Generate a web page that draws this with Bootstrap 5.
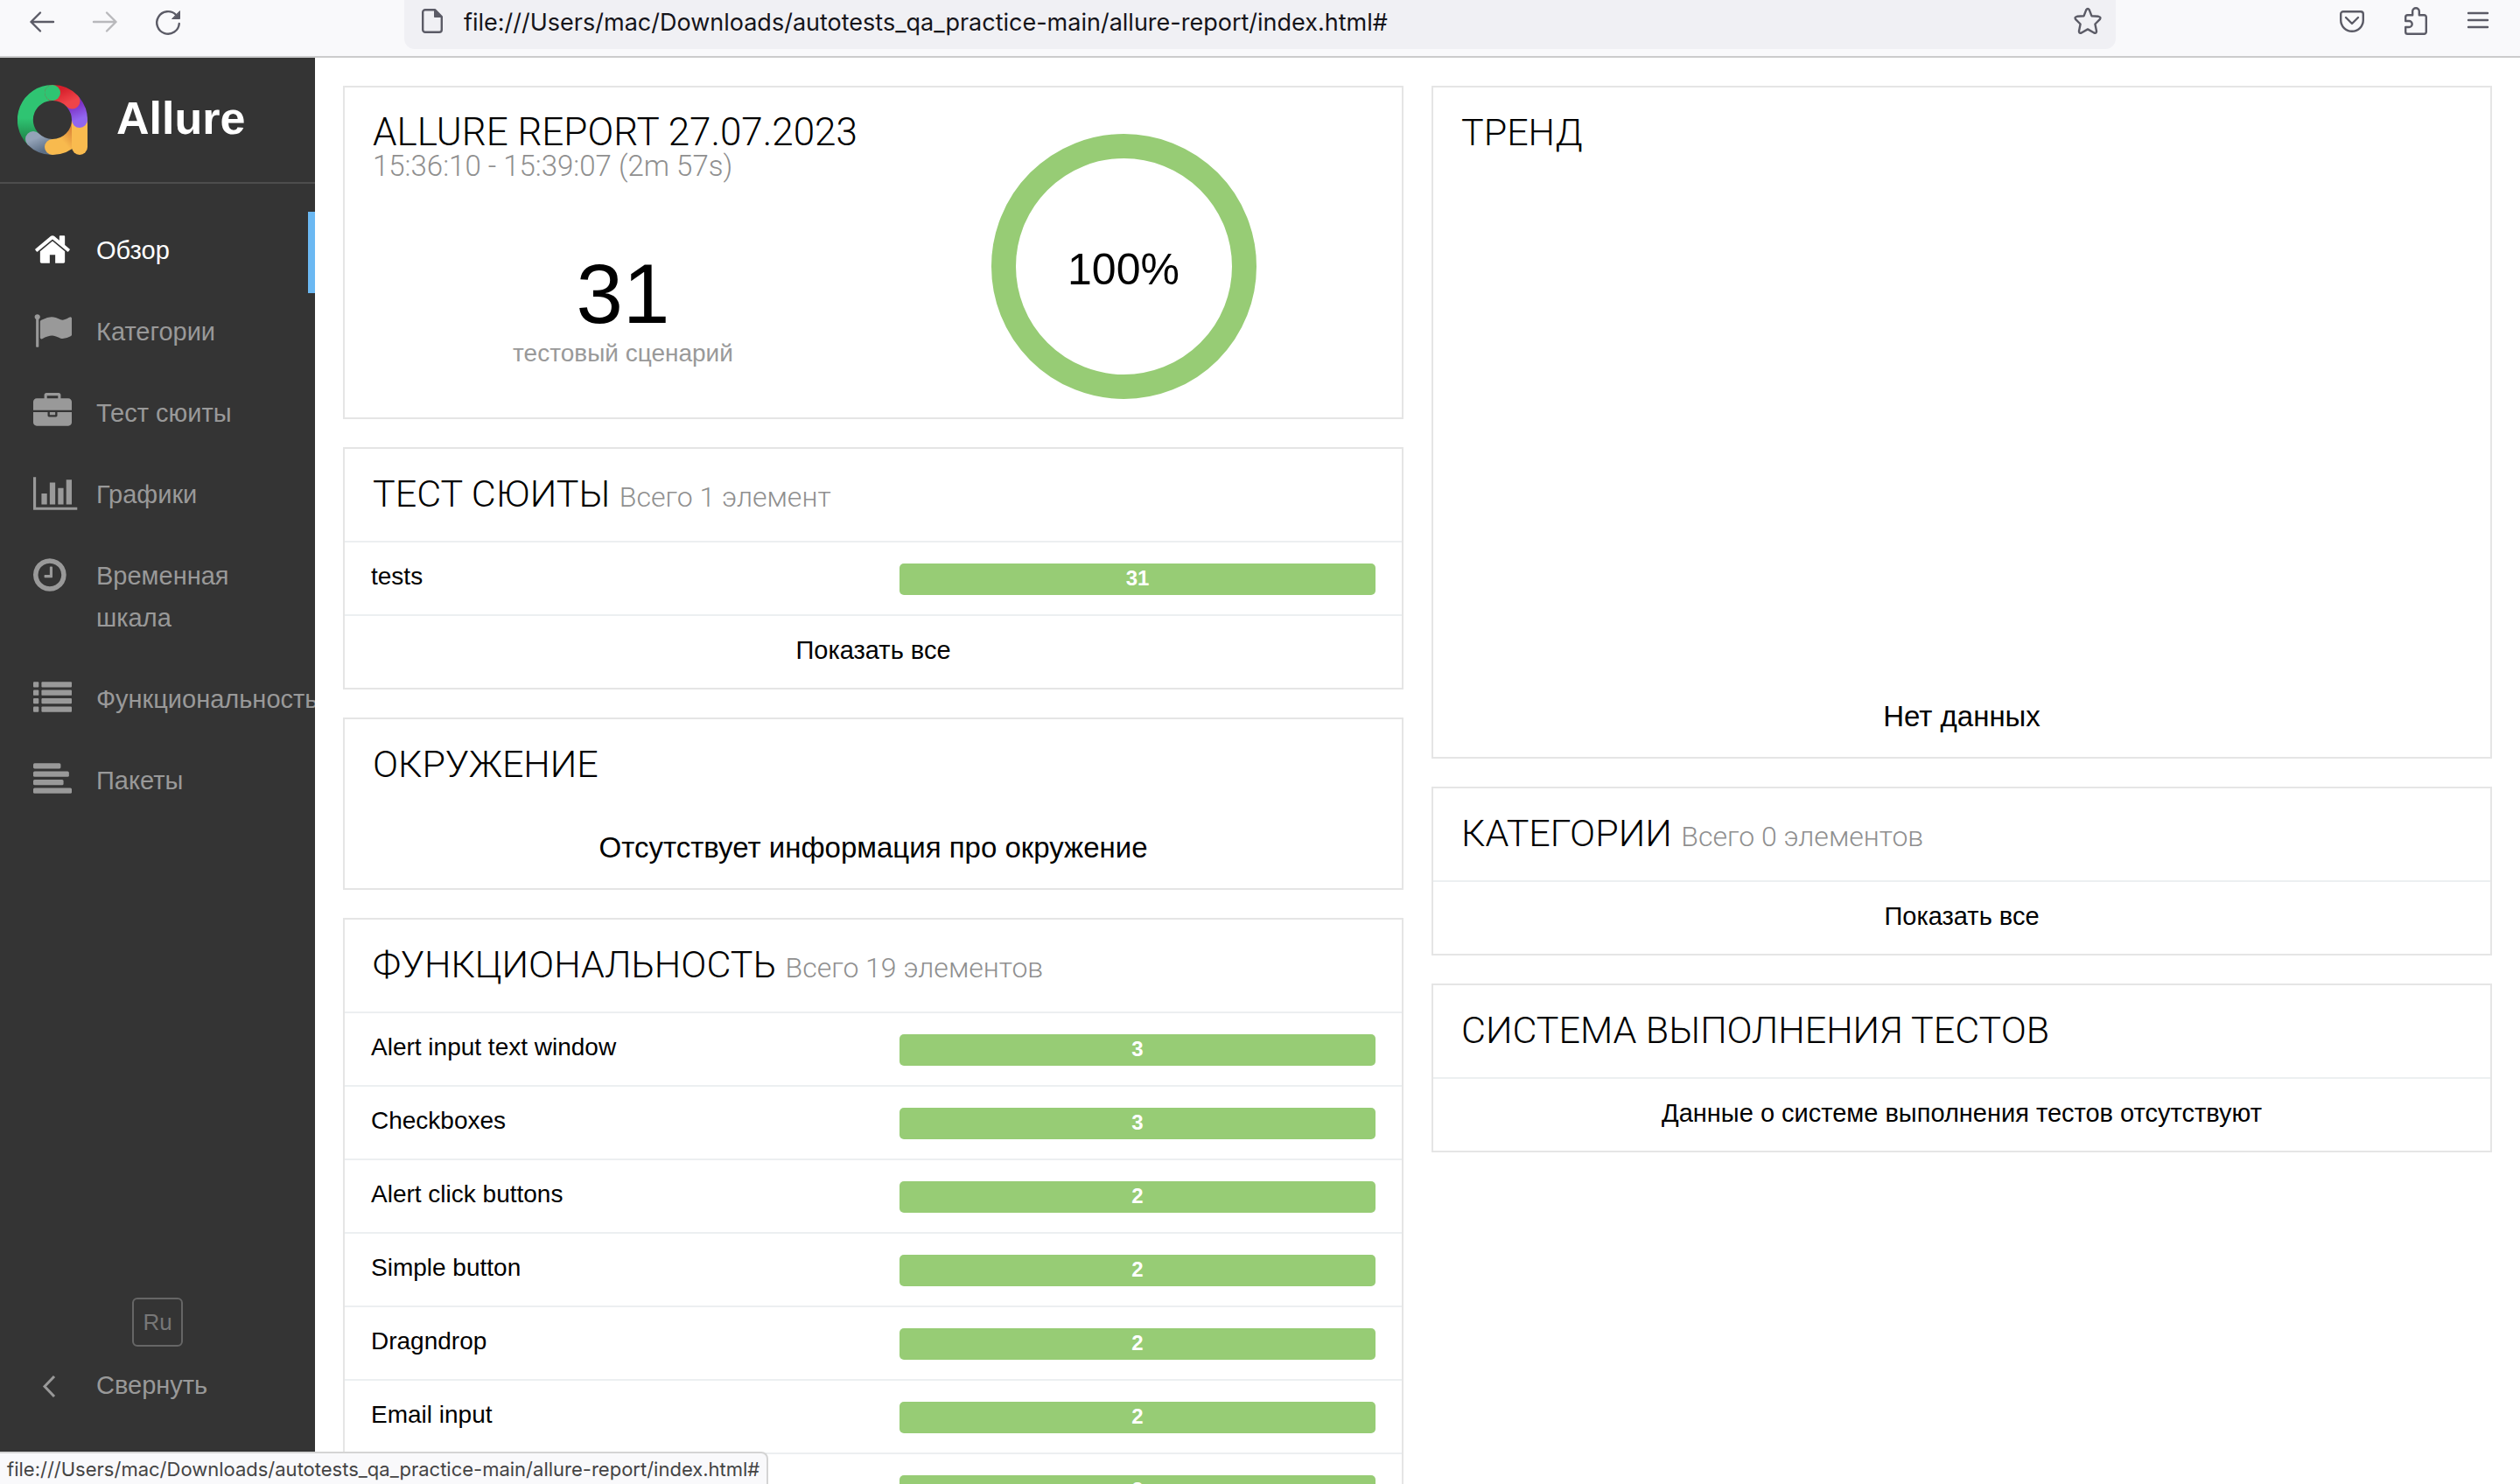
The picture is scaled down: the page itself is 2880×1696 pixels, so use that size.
<!DOCTYPE html>
<html lang="ru">
<head>
<meta charset="utf-8">
<meta name="viewport" content="width=device-width, initial-scale=1">
<title>Allure Report</title>
<link href="https://cdn.jsdelivr.net/npm/bootstrap@5.3.0/dist/css/bootstrap.min.css" rel="stylesheet">
<style>
:root{--ink:#000;--muted:#999;--pass:#97cc75;--side:#343434;--chrome:#5b5b66}
body{font-family:"Liberation Sans",sans-serif;font-size:28px;line-height:48px;color:var(--ink);background:#fff}
.app-shell{height:100vh;overflow:hidden}
/* browser toolbar */
.browser-bar{height:66px;flex:none;padding:0 32px;background:#f9f9fb;border-bottom:2px solid #ccc;font-family:Inter,sans-serif}
.tool-group{gap:40px}
.tool-btn{border:0;background:none;padding:0;line-height:0;color:var(--chrome)}
.tool-btn:disabled{color:#b9b9bc}
.tool-btn svg,.doc-icon{width:32px;height:48px;fill:none;stroke:currentColor;stroke-width:2.4;stroke-linecap:round;stroke-linejoin:round}
.doc-icon{color:var(--chrome)}
.url-box{height:56px;margin:0 254px;padding:0 16px 0 18px;gap:18px;background:#f0f0f4;border-radius:0 0 12px 12px}
.url-input{height:50px;border:0;padding:0;background:none;color:#15141a;font-size:27px;outline:0;min-width:0}
/* sidebar */
.side{width:360px;flex:none;background:var(--side);overflow:hidden}
.brand{height:144px;gap:33px;padding-left:20px;border-bottom:2px solid #4d4d4d;text-decoration:none}
.brand-name{font-size:52px;font-weight:700;color:#fff}
.side-nav{padding-top:32px}
.side-link{display:flex;gap:28px;width:100%;padding:20px 29px 25px 38px;font-size:29px;text-align:left;color:var(--muted);text-decoration:none;border:0;background:none}
.side-link svg{width:44px;height:44px;flex:none;margin-top:1px;overflow:visible;fill:currentColor}
.side-link span{min-width:0;flex:1}
.side-link.active{color:#fff;border-right:8px solid #6bb8f2}
.side-foot{padding-bottom:64px}
.lang-btn{width:58px;height:56px;padding:0;font-size:26px;line-height:50px;color:#777;background:none;border:2px solid #666;border-radius:6px}
/* dashboard */
.board{padding:32px;gap:32px;min-width:0;overflow:hidden}
.stack{gap:32px;flex:1 1 0;min-width:0}
.widget{flex:none;border:2px solid #e5e5e5}
.widget-title{margin:0;padding:26px 32px 29px;font-family:Roboto,sans-serif;font-weight:300;font-size:43px;line-height:50px}
.widget-title small{font-size:32px;line-height:28px;color:#8f8f8f}
.summary{padding:0 32px}
.summary .widget-title{padding:26px 0 84px;font-size:44px}
.summary .widget-title small{font-size:33px}
.total{font-size:96px;line-height:96px}
.total-label{font-size:28px;line-height:40px;color:var(--muted)}
.donut{width:303px;height:303px;margin:53px 0 21px}
.line{display:flex;height:84px;padding:15px 30px 0;border-top:2px solid #eceff1;color:inherit;text-decoration:none}
.line-center{justify-content:center;font-size:29px}
.bar{width:calc(50% - 30px);height:36px;margin-top:9px;border-radius:5px;background:var(--pass);color:#fff;font-size:24px;font-weight:700;line-height:34px;text-align:center}
.note{margin:0;padding:18px 32px 22px;font-size:33px;text-align:center}
.chart-area{height:572px}
/* hovered link address */
.status-tip{left:0;bottom:0;height:37px;padding:0 8px;font-family:Inter,sans-serif;font-size:22px;line-height:37px;color:#444;background:#f9f9fb;border:solid #d4d4d4;border-width:2px 2px 0 0;border-radius:0 8px 0 0}
</style>
</head>
<body>
<div class="app-shell d-flex flex-column position-relative">
  <header class="browser-bar d-flex align-items-start">
    <div class="tool-group d-flex">
      <button class="tool-btn" type="button" aria-label="Назад"><svg viewBox="0 0 32 48"><path d="M29 25H3.500M14 14.500 3.500 25 14 35.500"/></svg></button>
      <button class="tool-btn" type="button" aria-label="Вперёд" disabled><svg viewBox="0 0 32 48"><path d="M3 25h25.500M18 14.500 28.500 25 18 35.500"/></svg></button>
      <button class="tool-btn" type="button" aria-label="Обновить"><svg viewBox="0 0 32 48"><path d="M28.800 27A12.800 12.800 0 1 1 25 16.800"/><path fill="currentColor" stroke-width="1" d="M29.500 13v8.500H21z"/></svg></button>
    </div>
    <div class="url-box d-flex align-items-start flex-grow-1">
      <svg class="doc-icon flex-shrink-0" viewBox="0 0 32 48" aria-hidden="true"><path d="M6 11.200h11l7.800 8V34a2.800 2.800 0 0 1-2.800 2.800H6A2.800 2.800 0 0 1 3.200 34V14A2.800 2.800 0 0 1 6 11.200z"/><path fill="currentColor" stroke-width="1" d="M16.500 11v8.500H25z"/></svg>
      <input class="url-input flex-grow-1" type="text" aria-label="Адрес" value="file:///Users/mac/Downloads/autotests_qa_practice-main/allure-report/index.html#">
      <button class="tool-btn" type="button" aria-label="В закладки"><svg viewBox="0 0 32 48"><path d="M14.200 11.300q1.800-2.600 3.600 0L20.400 18.200l7.800.600q3.400.800 1.600 3.400L24.400 27.500l1.600 8q.2 3-2.800 2L16 33.400l-7.200 4.100q-3 1-2.800-2l1.600-8L2.200 22.200q-1.800-2.600 1.600-3.400l7.800-.6z"/></svg></button>
    </div>
    <div class="tool-group d-flex">
      <button class="tool-btn" type="button" aria-label="Pocket"><svg viewBox="0 0 32 48"><path d="M6 13.200h20a2.800 2.800 0 0 1 2.800 2.800v7a12.800 12.800 0 0 1-25.600 0v-7A2.800 2.800 0 0 1 6 13.200zM9 20l7 7 7-7"/></svg></button>
      <button class="tool-btn" type="button" aria-label="Расширения"><svg viewBox="0 0 32 48"><path d="M5.200 24V19.500a2.300 2.300 0 0 1 2.300-2.300H13.200V13a3.800 3.800 0 0 1 7.600 0v4.200h5.700a2.300 2.300 0 0 1 2.300 2.300V36.500a2.300 2.300 0 0 1-2.300 2.300h-19a2.300 2.300 0 0 1-2.300-2.300V31h4a3.500 3.500 0 0 0 0-7z"/></svg></button>
      <button class="tool-btn" type="button" aria-label="Меню"><svg viewBox="0 0 32 48"><path d="M5 15h22M5 23h22M5 31h22"/></svg></button>
    </div>
  </header>

  <div class="d-flex flex-grow-1 overflow-hidden">
    <aside class="side d-flex flex-column">
      <a class="brand d-flex align-items-center" href="#">
        <svg width="80" height="80" viewBox="0 0 80 80" fill="none" stroke-width="18" stroke-linecap="round" aria-hidden="true">
          <defs>
            <linearGradient id="lgGreen" x1="0" y1="0" x2="0" y2="1"><stop offset=".55" stop-color="#2fc472"/><stop offset="1" stop-color="#1f8a4c"/></linearGradient>
            <linearGradient id="lgGray" x1="0" y1="0" x2="1" y2="1"><stop offset="0" stop-color="#94a3b8"/><stop offset="1" stop-color="#5d6f86"/></linearGradient>
            <linearGradient id="lgOrange" gradientUnits="userSpaceOnUse" x1="46" y1="70" x2="66" y2="52"><stop offset=".3" stop-color="#f8ba4e"/><stop offset="1" stop-color="#d98036"/></linearGradient>
            <linearGradient id="lgPurple" gradientUnits="userSpaceOnUse" x1="62" y1="24" x2="70" y2="44"><stop offset="0" stop-color="#7c2fc4"/><stop offset=".8" stop-color="#9166ef"/></linearGradient>
            <linearGradient id="lgRed" x1="0" y1="0" x2="1" y2="1"><stop offset="0" stop-color="#d61f2b"/><stop offset="1" stop-color="#ef4449"/></linearGradient>
          </defs>
          <path d="M18 62A31 31 0 0 1 40 9" stroke="url(#lgGreen)" stroke-linecap="butt"/>
          <path d="M18 62A31 31 0 0 0 40 71" stroke="url(#lgGray)"/>
          <path d="M40 71A31 31 0 0 0 71 40" stroke="url(#lgOrange)"/>
          <path d="M71 44V71" stroke="#f9bb4f"/>
          <path d="M64 20.500A31 31 0 0 1 71 40" stroke="url(#lgPurple)"/>
          <path d="M40 9A31 31 0 0 1 62.500 18.500" stroke="url(#lgRed)"/>
          <circle cx="40" cy="9" r="9" fill="#2fc472"/>
        </svg>
        <span class="brand-name pb-1">Allure</span>
      </a>
      <nav class="side-nav">
        <a class="side-link active" href="#" aria-current="page"><svg viewBox="0 0 1792 1792"><path d="M1472 992v480q0 26-19 45t-45 19h-384v-384h-256v384h-384q-26 0-45-19t-19-45v-480q0-1 .5-3t.5-3l575-474 575 474q1 2 1 6zm223-69l-62 74q-8 9-21 11h-3q-13 0-21-7l-692-577-692 577q-12 8-24 7-13-2-21-11l-62-74q-8-10-7-23.500t11-21.500l719-599q32-26 76-26t76 26l244 204v-195q0-14 9-23t23-9h192q14 0 23 9t9 23v408l219 182q10 8 11 21.500t-7 23.500z"/></svg><span>Обзор</span></a>
        <a class="side-link" href="#"><svg viewBox="0 0 1792 1792"><path d="M320 256q0 72-64 110v1266q0 13-9.500 22.500t-22.500 9.500h-64q-13 0-22.500-9.500t-9.500-22.500v-1266q-64-38-64-110 0-53 37.500-90.500t90.500-37.500 90.500 37.500 37.500 90.500zm1472 64v763q0 25-12.500 38.500t-39.500 27.500q-215 116-369 116-61 0-123.500-22t-108.500-48-115.500-48-142.500-22q-192 0-464 146-17 9-33 9-26 0-45-19t-19-45v-742q0-32 31-55 21-14 79-43 236-120 421-120 107 0 200 29t219 88q38 19 88 19 54 0 117.500-21t110-47 88-47 54.500-21q26 0 45 19t19 45z"/></svg><span>Категории</span></a>
        <a class="side-link" href="#"><svg viewBox="0 0 1792 1792"><path d="M640 256h512v-128h-512v128zm1152 640v480q0 66-47 113t-113 47h-1472q-66 0-113-47t-47-113v-480h672v160q0 26 19 45t45 19h320q26 0 45-19t19-45v-160h672zm-768 0v128h-256v-128h256zm768-480v384h-1792v-384q0-66 47-113t113-47h352v-160q0-40 28-68t68-28h576q40 0 68 28t28 68v160h352q66 0 113 47t47 113z"/></svg><span>Тест сюиты</span></a>
        <a class="side-link" href="#"><svg viewBox="0 0 1792 1792"><path d="M640 896v512h-256v-512h256zm384-512v1024h-256v-1024h256zm1024 1152v128h-2048v-1536h128v1408h1920zm-640-896v768h-256v-768h256zm384-384v1152h-256v-1152h256z"/></svg><span>Графики</span></a>
        <a class="side-link" href="#"><svg viewBox="128 0 1792 1792"><path d="M1024 544v448q0 14-9 23t-23 9h-320q-14 0-23-9t-9-23v-64q0-14 9-23t23-9h224v-352q0-14 9-23t23-9h64q14 0 23 9t9 23zm416 352q0-148-73-273t-198-198-273-73-273 73-198 198-73 273 73 273 198 198 273 73 273-73 198-198 73-273zm224 0q0 209-103 385.500t-279.500 279.500-385.500 103-385.500-103-279.500-279.500-103-385.500 103-385.500 279.500-279.500 385.500-103 385.500 103 279.500 279.500 103 385.500z"/></svg><span>Временная шкала</span></a>
        <a class="side-link" href="#"><svg viewBox="0 0 1792 1792"><g><rect y="128" width="256" height="256" rx="40"/><rect y="512" width="256" height="256" rx="40"/><rect y="896" width="256" height="256" rx="40"/><rect y="1280" width="256" height="256" rx="40"/><rect x="384" y="128" width="1408" height="256" rx="40"/><rect x="384" y="512" width="1408" height="256" rx="40"/><rect x="384" y="896" width="1408" height="256" rx="40"/><rect x="384" y="1280" width="1408" height="256" rx="40"/></g></svg><span>Функциональность</span></a>
        <a class="side-link" href="#"><svg viewBox="0 0 1792 1792"><rect y="128" width="1280" height="256" rx="64"/><rect y="512" width="1664" height="256" rx="64"/><rect y="896" width="1408" height="256" rx="64"/><rect y="1280" width="1792" height="256" rx="64"/></svg><span>Пакеты</span></a>
      </nav>
      <div class="side-foot mt-auto text-center">
        <button class="lang-btn d-block mx-auto" type="button">Ru</button>
        <button class="side-link" type="button"><svg viewBox="0 0 44 44"><path d="M24 13 13 24.500 24 36" fill="none" stroke="currentColor" stroke-width="3"/></svg><span>Свернуть</span></button>
      </div>
    </aside>

    <main class="board d-flex flex-grow-1 align-items-start">
      <div class="stack d-flex flex-column">
        <section class="widget summary d-flex">
          <div class="w-50 text-center">
            <h2 class="widget-title text-start text-nowrap">ALLURE REPORT 27.07.2023 <small class="d-block">15:36:10 - 15:39:07 (2m 57s)</small></h2>
            <div class="total">31</div>
            <div class="total-label">тестовый сценарий</div>
          </div>
          <div class="w-50 text-center lh-1">
            <svg class="donut d-block mx-auto" viewBox="0 0 303 303"><circle cx="151.500" cy="151.500" r="137.500" fill="none" stroke="#97cc75" stroke-width="28"/><text x="151" y="172" text-anchor="middle" font-size="50">100%</text></svg>
          </div>
        </section>

        <section class="widget">
          <h2 class="widget-title">ТЕСТ СЮИТЫ <small>Всего 1 элемент</small></h2>
          <a class="line" href="#"><span class="flex-grow-1">tests</span><span class="bar">31</span></a>
          <a class="line line-center" href="#">Показать все</a>
        </section>

        <section class="widget">
          <h2 class="widget-title">ОКРУЖЕНИЕ</h2>
          <p class="note">Отсутствует информация про окружение</p>
        </section>

        <section class="widget">
          <h2 class="widget-title">ФУНКЦИОНАЛЬНОСТЬ <small>Всего 19 элементов</small></h2>
          <a class="line" href="#"><span class="flex-grow-1">Alert input text window</span><span class="bar">3</span></a>
          <a class="line" href="#"><span class="flex-grow-1">Checkboxes</span><span class="bar">3</span></a>
          <a class="line" href="#"><span class="flex-grow-1">Alert click buttons</span><span class="bar">2</span></a>
          <a class="line" href="#"><span class="flex-grow-1">Simple button</span><span class="bar">2</span></a>
          <a class="line" href="#"><span class="flex-grow-1">Dragndrop</span><span class="bar">2</span></a>
          <a class="line" href="#"><span class="flex-grow-1">Email input</span><span class="bar">2</span></a>
          <a class="line" href="#"><span class="flex-grow-1"></span><span class="bar">2</span></a>
        </section>
      </div>

      <div class="stack d-flex flex-column">
        <section class="widget">
          <h2 class="widget-title">ТРЕНД</h2>
          <div class="chart-area"></div>
          <p class="note">Нет данных</p>
        </section>

        <section class="widget">
          <h2 class="widget-title">КАТЕГОРИИ <small>Всего 0 элементов</small></h2>
          <a class="line line-center" href="#">Показать все</a>
        </section>

        <section class="widget">
          <h2 class="widget-title">СИСТЕМА ВЫПОЛНЕНИЯ ТЕСТОВ</h2>
          <div class="line line-center">Данные о системе выполнения тестов отсутствуют</div>
        </section>
      </div>
    </main>
  </div>

  <div class="status-tip position-absolute">file:///Users/mac/Downloads/autotests_qa_practice-main/allure-report/index.html#</div>
</div>
<script src="https://cdn.jsdelivr.net/npm/bootstrap@5.3.0/dist/js/bootstrap.bundle.min.js"></script>
</body>
</html>
